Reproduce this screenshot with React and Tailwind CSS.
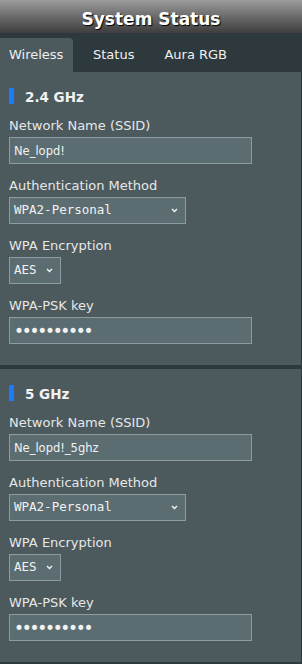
import React from "react";

const Chevron = () => (
  <svg width="7" height="5" viewBox="0 0 7 5" className="shrink-0">
    <polyline points="1,1 3.5,3.6 6,1" fill="none" stroke="#f2f2f2" strokeWidth="1.4" />
  </svg>
);

function Field({ label, children }) {
  return (
    <div>
      <div className="text-[13px] leading-4 text-[#e6e8e8] mb-[3px]">{label}</div>
      {children}
    </div>
  );
}

function TextBox({ value, type = "text" }) {
  return (
    <input
      readOnly
      type={type}
      value={value}
      className={
        "block w-[243px] h-[27px] bg-[#5b6d71] border border-[#8d9ca0] pl-[4px] text-[#f2f2f2] outline-none " +
        (type === "password" ? "text-[17px] tracking-[-2.3px]" : "text-[11.5px]")
      }
      style={{ fontFamily: '"DejaVu Sans", sans-serif' }}
    />
  );
}

function Picker({ value, width }) {
  return (
    <div
      className={
        "flex items-center justify-between h-[27px] bg-[#5b6d71] border border-[#8d9ca0] pl-[4px] pr-[7px] " +
        width
      }
    >
      <span className="text-[12.5px] text-[#f2f2f2] font-['DejaVu_Sans_Mono',monospace]">{value}</span>
      <Chevron />
    </div>
  );
}

function Band({ title, ssid }) {
  return (
    <section className="w-[301px] bg-[#4c595d] pt-4 pb-[21px] pl-[9px] flex flex-col gap-[14px]">
      <div className="flex items-center h-4">
        <div className="w-[5px] h-4 bg-[#1a7bff]" />
        <span className="ml-[11px] text-[13.5px] font-bold leading-4 text-[#f2f2f2] mt-[2px]">{title}</span>
      </div>
      <Field label="Network Name (SSID)">
        <TextBox value={ssid} />
      </Field>
      <Field label="Authentication Method">
        <Picker value="WPA2-Personal" width="w-[177px]" />
      </Field>
      <Field label="WPA Encryption">
        <Picker value="AES" width="w-[52px]" />
      </Field>
      <Field label="WPA-PSK key">
        <TextBox type="password" value="1234567890" />
      </Field>
    </section>
  );
}

export default function App() {
  return (
    <div className="w-[302px] h-[664px] overflow-hidden bg-[#2e393d] font-['DejaVu_Sans',sans-serif]">
      <div className="h-[33px] bg-gradient-to-b from-[#9c9c9c] to-[#3e3e3e] flex justify-center pt-[11px]">
        <span className="text-[17px] leading-4 font-bold text-white [text-shadow:1px_1px_1px_#000]">
          System Status
        </span>
      </div>
      <div className="h-[39px] flex items-end text-[13px] text-[#eef0f0]">
        <div className="w-[73px] h-[34px] bg-[#4c595d] rounded-tr-[4px] flex items-center pl-[9px]">
          Wireless
        </div>
        <div className="h-[34px] flex items-center ml-5">Status</div>
        <div className="h-[34px] flex items-center ml-[30px]">Aura RGB</div>
      </div>
      <Band title="2.4 GHz" ssid="Ne_lopd!" />
      <div className="h-[4px]" />
      <Band title="5 GHz" ssid="Ne_lopd!_5ghz" />
    </div>
  );
}
